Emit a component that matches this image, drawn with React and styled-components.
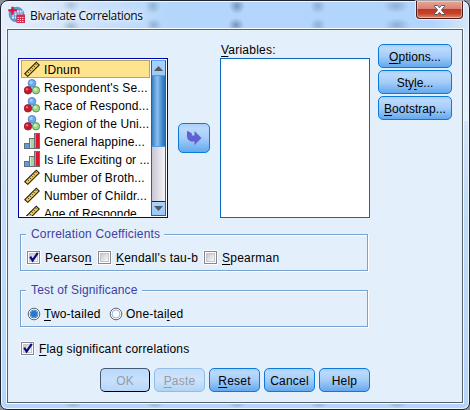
import React from "react";
import styled, { createGlobalStyle, css } from "styled-components";

const GlobalStyle = createGlobalStyle`
  * { box-sizing: border-box; }
  body { margin: 0; background: #8d9298; overflow: hidden; }
`;

const Frame = styled.div`
  width: 470px;
  height: 410px;
  padding: 1px 6px 6px;
  border: 1px solid #20242e;
  border-radius: 8px 8px 7px 7px;
  background:
    radial-gradient(ellipse 9px 7px at 70px 4px, #8ba6c688, transparent),
    radial-gradient(ellipse 8px 8px at 152px 5px, #7c9cc2aa, transparent),
    radial-gradient(ellipse 8px 8px at 236px 5px, #6785adcc, transparent),
    radial-gradient(ellipse 8px 8px at 317px 5px, #7c9cc2aa, transparent),
    radial-gradient(ellipse 13px 7px at 395px 5px, #7c9cc2aa, transparent),
    radial-gradient(ellipse 9px 7px at 70px 25px, #8ba6c6aa, transparent),
    radial-gradient(ellipse 8px 7px at 153px 24px, #7c9cc2aa, transparent),
    radial-gradient(ellipse 8px 7px at 235px 24px, #6785adcc, transparent),
    radial-gradient(ellipse 8px 7px at 317px 24px, #7c9cc2aa, transparent),
    radial-gradient(ellipse 13px 7px at 396px 24px, #7c9cc2aa, transparent),
    radial-gradient(ellipse 9px 3px at 72px 404px, #8ba6c6aa, transparent),
    radial-gradient(ellipse 9px 3px at 154px 404px, #8ba6c6aa, transparent),
    radial-gradient(ellipse 9px 3px at 236px 404px, #8ba6c6aa, transparent),
    radial-gradient(ellipse 9px 3px at 318px 404px, #8ba6c6aa, transparent),
    radial-gradient(ellipse 10px 3px at 396px 404px, #8ba6c6aa, transparent),
    linear-gradient(90deg, #e4effc 0, #cfe3fb 80px, #b4d6fb 170px, #b2d5fb 430px, #d4e7fb 100%) top / 100% 28px no-repeat,
    linear-gradient(#d4e7fb, #e6f2fd) right top / 7px 120px no-repeat,
    linear-gradient(#e4effc 28px, #c3dcf7 200px, #b4d5fa);
  box-shadow: inset 0 0 0 1px #eef7ff;
`;

const TitleBar = styled.header`
  display: flex;
  align-items: flex-start;
  height: 27px;
`;

const AppIcon = styled.svg`
  margin: 4px 0 0 1px;
  width: 17px;
  height: 17px;
`;

const Title = styled.h1`
  margin: 5px 0 0 5px;
  flex: 1;
  font: 400 12px/17px "Open Sans", sans-serif;
  letter-spacing: -0.37px;
  color: #05070c;
  text-shadow: 0 0 6px #fff, 0 0 8px #fff;
`;

const CloseButton = styled.button`
  width: 47px;
  height: 18px;
  margin-top: -1px;
  padding: 0;
  display: flex;
  justify-content: center;
  align-items: center;
  border: 1px solid #4a1a1c;
  border-top: 0;
  border-radius: 0 0 4px 4px;
  background: linear-gradient(#e3a898 0, #d98273 45%, #bd3822 50%, #c64428 75%, #dc8b6c 100%);
  box-shadow: inset 0 0 0 1px #ffffff66, 0 0 1px 1px #ffffffaa;
`;

const Panel = styled.main`
  height: 374px;
  border: 1px solid #59626d;
  background: #e3effb;
  box-shadow: 0 0 0 1px #f6fbff;
  font: 12px/14px "Liberation Sans", Arial, sans-serif;
  color: #000;
`;

const Upper = styled.section`
  display: flex;
  align-items: flex-start;
  height: 197px;
  padding: 14px 0 0 10px;
`;

const SourceList = styled.div`
  display: flex;
  width: 150px;
  height: 160px;
  margin-top: 14px;
  padding: 1px 1px 1px 2px;
  border: 1px solid #0000aa;
  background: #fff;
`;

const Rows = styled.ul`
  flex: 1;
  margin: 0 1px 0 0;
  padding: 0;
  overflow: hidden;
  list-style: none;
`;

const Row = styled.li`
  display: flex;
  align-items: center;
  height: 18px;
  padding-left: 2px;
  line-height: 16px;
  border: 1px solid ${(p) => (p.$selected ? "#b5a469" : "transparent")};
  background: ${(p) => (p.$selected ? "#ffe48d" : "transparent")};
`;

const RowIcon = styled.svg`
  width: 16px;
  height: 16px;
  margin-right: 4px;
  flex: none;
`;

const Text = styled.span`
  white-space: pre;
  letter-spacing: ${(p) => p.$ls || 0}px;
`;

const RowText = styled(Text)`
  padding-top: 1px;
`;

const Key = styled.span`
  text-decoration: underline;
  text-decoration-thickness: 1px;
  text-underline-offset: 2px;
`;

const ScrollBar = styled.div`
  display: flex;
  flex-direction: column;
  width: 15px;
  border: 1px solid #1668b4;
  border-top-color: #57a5ee;
  background: linear-gradient(90deg, #c9c6d2, #f4f3f8);
`;

const ScrollArrow = styled.div`
  display: flex;
  align-items: center;
  justify-content: center;
  height: 14px;
  flex: none;
  background: linear-gradient(#a6d2ff, #9bc9f8);
  border-top: ${(p) => (p.$down ? "1px solid #24252c" : "0")};
`;

const Thumb = styled.div`
  height: 72px;
  border: 1px solid #4b9ded;
  border-width: 1px 0;
  background: linear-gradient(90deg, #3b7ebd, #74afe5 30%, #8cc0ee 40%, #3d87cb 80%, #2670b6);
`;

const Track = styled.div`
  flex: 1;
`;

const buttonFace = css`
  border: 1px solid #0c7bd8;
  border-radius: 5px;
  background: linear-gradient(#a9cffa 0, #badafd 15%, #a6cdf8 50%, #63a9ef 100%);
`;

const MoveButton = styled.button`
  ${buttonFace}
  display: flex;
  align-items: center;
  justify-content: center;
  width: 32px;
  height: 30px;
  padding: 0;
  margin: 79px 10px 0;
`;

const Target = styled.div`
  width: 150px;
`;

const TargetLabel = styled.div`
  height: 14px;
  padding-left: 1px;
  line-height: 13px;
`;

const TargetBox = styled.div`
  height: 160px;
  border: 1px solid #0b69bd;
  background: #fff;
`;

const SideButtons = styled.div`
  display: flex;
  flex-direction: column;
  gap: 2px;
  margin-left: 8px;
`;

const Button = styled.button`
  ${buttonFace}
  width: ${(p) => p.$w}px;
  height: 24px;
  padding: 1px 0 0;
  font: inherit;
  color: #000;
  white-space: nowrap;
  ${(p) => p.$state === "default" && css`
    border-color: #475a73 #000 #000 #475a73;
    background: linear-gradient(#b9d9fd, #c8e0fc 50%, #b5d6fa);
    color: #969ca5;
  `}
  ${(p) => p.$state === "disabled" && css`
    border-color: #8cbdec;
    background: linear-gradient(#c6dffc, #cfe3fb 50%, #b1d4f8);
    color: #969ca5;
  `}
`;

const Group = styled.fieldset`
  display: block;
  width: 348px;
  height: 44px;
  min-width: 0;
  margin: 0 0 12px 12px;
  padding: 0;
  border: 1px solid #75a3d4;
  box-shadow: 1px 1px 0 #fff, inset 1px 1px 0 #fff;
`;

const Legend = styled.legend`
  margin-left: 5px;
  padding: 0 4px 0 5px;
  height: 15px;
  line-height: 15px;
  background: #e3effb;
  color: #3d41a4;
`;

const Choices = styled.div`
  display: flex;
  align-items: center;
  height: 19px;
  margin: ${(p) => p.$m || "6px 0 0 6px"};
`;

const Choice = styled.label`
  display: flex;
  align-items: center;
  width: ${(p) => p.$w}px;
  white-space: nowrap;
`;

const CheckBox = styled.span`
  display: flex;
  width: 13px;
  height: 13px;
  flex: none;
  margin-right: 5px;
  border: 1px solid #85878c;
  background: linear-gradient(135deg, #b9babd, #f8f8f8 80%);
  box-shadow: 0 0 0 1px #f8fbff, inset 0 0 0 1px #fff, inset 0 0 0 2px #c6c6c8;
`;

const Tick = styled.svg`
  width: 11px;
  height: 11px;
  overflow: visible;
`;

const RadioMark = styled.svg`
  width: 14px;
  height: 14px;
  flex: none;
  margin-right: 3px;
`;

const Footer = styled.footer`
  display: flex;
  gap: 4px;
  margin: 10px 0 0 92px;
`;

function Glyph({ kind }) {
  if (kind === "scale")
    return (
      <RowIcon viewBox="0 0 16 16">
        <path d="M.8 12.7 12.3 1.2l3 2.8L3.8 15.3z" fill="#fccb35" stroke="#222017" strokeWidth="1.1" />
        <path d="m3.6 10.6 1.2 1.2M5.5 8.6l1.6 1.6M7.5 6.6l1.2 1.2M9.4 4.7 11 6.3M11.4 2.8l1.2 1.2" stroke="#2f2914" strokeWidth=".9" />
      </RowIcon>
    );
  if (kind === "nominal")
    return (
      <RowIcon viewBox="0 0 16 16">
        <circle cx="8" cy="4.3" r="3.9" fill="#6aa8ef" stroke="#4779b7" strokeWidth=".7" />
        <circle cx="4" cy="11.3" r="3.8" fill="#c51932" stroke="#851225" strokeWidth=".7" />
        <circle cx="12" cy="11.3" r="3.7" fill="#9bd683" stroke="#458447" strokeWidth=".8" />
        <circle cx="7.2" cy="3.4" r="1.6" fill="#a5cdf8" />
        <circle cx="3" cy="10.2" r="1.2" fill="#ed6675" />
        <circle cx="11.3" cy="10.3" r="1.6" fill="#ceefbd" />
      </RowIcon>
    );
  return (
    <RowIcon viewBox="0 0 16 16" shapeRendering="crispEdges">
      <rect x=".5" y="10.5" width="5" height="5" fill="#5b9ce3" stroke="#6b6f75" />
      <rect x="5.5" y="5.5" width="5" height="10" fill="#a9d0a2" stroke="#6b6f75" />
      <rect x="10.5" y=".5" width="5" height="15" fill="#dc1730" stroke="#6b6f75" />
      <path d="M11.5 1v14" stroke="#f27779" />
      <path d="M6.5 6v9" stroke="#d4ebcb" />
    </RowIcon>
  );
}

function Check({ on }) {
  return (
    <CheckBox>
      {on && (
        <Tick viewBox="0 0 11 11">
          <path d="M2.2 4.6 4.6 8.4 9.8.8" fill="none" stroke="#0b0b83" strokeWidth="2.2" />
        </Tick>
      )}
    </CheckBox>
  );
}

function Radio({ on }) {
  return (
    <RadioMark viewBox="0 0 14 14">
      <circle cx="7" cy="7" r="5.8" fill="#fff" stroke="#62676c" strokeWidth="1" />
      <circle cx="7" cy="7" r="4" fill={on ? "#fff" : "#f8fbff"} stroke={on ? "#3d85c9" : "#99b9d7"} />
      {on && <circle cx="7" cy="7" r="3.2" fill="#2379cf" />}
    </RadioMark>
  );
}

const variables = [
  ["scale", "IDnum", 0.15],
  ["nominal", "Respondent's Se...", 0.15],
  ["nominal", "Race of Respond...", 0.12],
  ["nominal", "Region of the Uni...", 0.12],
  ["ordinal", "General happine...", 0.12],
  ["ordinal", "Is Life Exciting or ...", 0.04],
  ["scale", "Number of Broth...", 0.15],
  ["scale", "Number of Childr...", 0.15],
  ["scale", "Age of Responde...", 0],
];

export default function App() {
  return (
    <>
      <GlobalStyle />
      <Frame>
        <TitleBar>
          <AppIcon viewBox="0 0 17 17">
            <circle cx="8.5" cy="8.5" r="7.8" fill="#6495c8" />
            <path d="M6 5.5h9M4 8.5h11M4 11.5h4" stroke="#e6f0fa" strokeWidth="1.8" strokeDasharray="2 .8" />
            <path d="M4.5.8v8M.3 4.3h8.5" stroke="#d9133f" strokeWidth="2.3" />
            <path d="M8.5 8.5H17V17H8.5z" fill="#d02a4c" />
            <path d="M9.5 11.5h6.5M9.5 13.5h6.5M9.5 15.5h6.5" stroke="#ffe8ed" strokeDasharray="1.3 1" />
          </AppIcon>
          <Title>Bivariate Correlations</Title>
          <CloseButton aria-label="Close">
            <svg width="13" height="12" viewBox="0 0 13 12">
              <path d="M1.5 1.5h3l2 2.3 2-2.3h3v1L8.4 6l3.1 3.5v1h-3l-2-2.3-2 2.3h-3v-1L4.6 6 1.5 2.5z" fill="#fff" stroke="#535666" />
            </svg>
          </CloseButton>
        </TitleBar>
        <Panel>
          <Upper>
            <SourceList>
              <Rows>
                {variables.map(([kind, name, ls], i) => (
                  <Row key={name} $selected={i === 0}>
                    <Glyph kind={kind} />
                    <RowText $ls={ls}>{name}</RowText>
                  </Row>
                ))}
              </Rows>
              <ScrollBar>
                <ScrollArrow>
                  <svg width="9" height="5"><path d="M0 5 4.5 0 9 5z" fill="#55585d" /></svg>
                </ScrollArrow>
                <Thumb />
                <Track />
                <ScrollArrow $down>
                  <svg width="9" height="5"><path d="M0 0h9L4.5 5z" fill="#55585d" /></svg>
                </ScrollArrow>
              </ScrollBar>
            </SourceList>
            <MoveButton aria-label="Move to variables">
              <svg width="16" height="16" viewBox="0 0 16 16">
                <path d="M1 .8 5.8 3.2V5.5H8.5V1L15.5 8 8.5 15V11.5H5Q1 10 1 6z" fill="#6160d0" />
              </svg>
            </MoveButton>
            <Target>
              <TargetLabel><Text $ls={0.22}><Key>V</Key>ariables:</Text></TargetLabel>
              <TargetBox />
            </Target>
            <SideButtons>
              <Button $w={74}><Text $ls={0.05}><Key>O</Key>ptions...</Text></Button>
              <Button $w={74}><Text>Sty<Key>l</Key>e...</Text></Button>
              <Button $w={74}><Text $ls={0.05}><Key>B</Key>ootstrap...</Text></Button>
            </SideButtons>
          </Upper>
          <Group>
            <Legend><Text $ls={0.2}>Correlation Coefficients</Text></Legend>
            <Choices>
              <Choice $w={71}><Check on /><Text $ls={0.3}>Pearso<Key>n</Key></Text></Choice>
              <Choice $w={106}><Check /><Text $ls={0.2}><Key>K</Key>endall's tau-b</Text></Choice>
              <Choice $w={90}><Check /><Text $ls={0.25}><Key>S</Key>pearman</Text></Choice>
            </Choices>
          </Group>
          <Group>
            <Legend><Text $ls={0.16}>Test of Significance</Text></Legend>
            <Choices>
              <Choice $w={82}><Radio on /><Text $ls={0.2}><Key>T</Key>wo-tailed</Text></Choice>
              <Choice $w={82}><Radio /><Text $ls={0.2}>One-tai<Key>l</Key>ed</Text></Choice>
            </Choices>
          </Group>
          <Choices $m="0 0 0 13px">
            <Choice $w={180}><Check on /><Text $ls={0.17}><Key>F</Key>lag significant correlations</Text></Choice>
          </Choices>
          <Footer>
            <Button $w={50} $state="default"><Text>OK</Text></Button>
            <Button $w={51} $state="disabled"><Text $ls={0.2}><Key>P</Key>aste</Text></Button>
            <Button $w={51}><Text $ls={0.2}><Key>R</Key>eset</Text></Button>
            <Button $w={51}><Text $ls={0.2}>Cancel</Text></Button>
            <Button $w={51}><Text $ls={0.2}>Help</Text></Button>
          </Footer>
        </Panel>
      </Frame>
    </>
  );
}
